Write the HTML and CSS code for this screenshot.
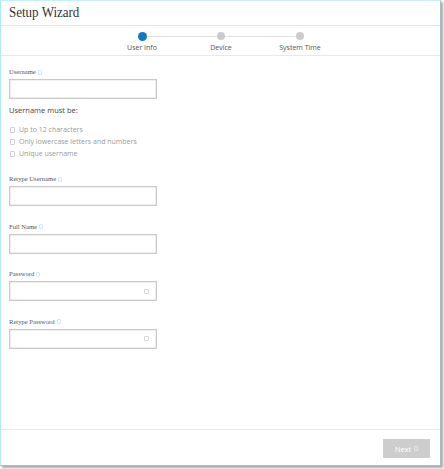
FILE: index.html
```html
<!DOCTYPE html>
<html>
<head>
<meta charset="utf-8">
<link rel="stylesheet" href="styles.css">
</head>
<body>
<div class="window">
  <div class="header"><h1 class="title">Setup Wizard</h1></div>
  <div class="stepper">
    <div class="step active"><span class="dot"></span><span class="step-label">User Info</span></div>
    <div class="step"><span class="dot"></span><span class="step-label">Device</span></div>
    <div class="step last"><span class="dot"></span><span class="step-label">System Time</span></div>
  </div>
  <div class="form">
    <div class="field first">
      <div class="label">Username <span class="info"></span></div>
      <div class="input"></div>
    </div>
    <div class="rules-title">Username must be:</div>
    <ul class="rules">
      <li><span class="box"></span>Up to 12 characters</li>
      <li><span class="box"></span>Only lowercase letters and numbers</li>
      <li><span class="box"></span>Unique username</li>
    </ul>
    <div class="field after-rules">
      <div class="label">Retype Username <span class="info"></span></div>
      <div class="input"></div>
    </div>
    <div class="field">
      <div class="label">Full Name <span class="info"></span></div>
      <div class="input"></div>
    </div>
    <div class="field">
      <div class="label">Password <span class="info"></span></div>
      <div class="input pw"><span class="eye"></span></div>
    </div>
    <div class="field">
      <div class="label">Retype Password <span class="info"></span></div>
      <div class="input pw"><span class="eye"></span></div>
    </div>
  </div>
  <div class="footer">
    <button class="next">Next <span class="arrow"></span></button>
  </div>
</div>
</body>
</html>
```
FILE: styles.css
```css
html, body { margin: 0; padding: 0; background: #fff; }
body { width: 444px; height: 469px; overflow: hidden; }
.window {
  box-sizing: border-box;
  width: 441px;
  height: 466px;
  border-left: 1px solid #aeeafb;
  border-top: 1px solid #c6f1fc;
  border-right: 1px solid #a9bcc3;
  border-bottom: 1px solid #a9bcc3;
  box-shadow: 2px 2px 2px rgba(60, 70, 75, 0.45);
  display: flex;
  flex-direction: column;
  background: #fff;
}
.header {
  height: 24px;
  border-bottom: 1px solid #e6e6e6;
  display: flex;
  align-items: center;
  padding-left: 8px;
}
.title {
  margin: 0;
  font-family: "Liberation Serif", "Times New Roman", serif;
  font-weight: normal;
  font-size: 13px;
  color: #333;
  line-height: 1;
  margin-top: -1px;
  transform: scaleY(1.1);
  transform-origin: left center;
}
.stepper {
  height: 29px;
  border-bottom: 1px solid #e8e8e8;
  display: flex;
  justify-content: center;
  padding-left: 1px;
}
.step {
  width: 79px;
  position: relative;
  display: flex;
  flex-direction: column;
  align-items: center;
}
.step:not(.last)::after {
  content: "";
  position: absolute;
  top: 10px;
  left: 50%;
  width: 79px;
  height: 1px;
  background: #e0e0e0;
}
.dot {
  margin-top: 6px;
  width: 8px;
  height: 8px;
  border-radius: 50%;
  background: #cbcbcb;
  position: relative;
  z-index: 1;
}
.step.active .dot {
  margin-top: 5.5px;
  width: 9px;
  height: 9px;
  background: #1677c4;
}
.step-label {
  margin-top: 3px;
  font-family: "Open Sans", sans-serif;
  font-size: 7px;
  line-height: 10px;
  color: #555;
}
.step.active .step-label { margin-top: 2.5px; }
.form {
  flex: 1;
  padding: 0 8px;
  border-bottom: 1px solid #e8e8e8;
}
.field { margin-top: 15.5px; }
.field.first { margin-top: 11px; }
.field.after-rules { margin-top: 14px; }
.label {
  font-family: "Liberation Serif", "Times New Roman", serif;
  font-size: 6.6px;
  line-height: 10px;
  color: #555;
  display: flex;
  align-items: center;
}
.info {
  display: inline-block;
  margin-left: 2px;
  width: 2px;
  height: 3px;
  border: 1px solid #cfe7f6;
  border-radius: 1px;
}
.input {
  margin-top: 2px;
  box-sizing: border-box;
  width: 148px;
  height: 20px;
  border: 1px solid #c9c9c9;
  box-shadow: inset 0 0 0 0.5px #e0e0e0;
  background: #fff;
  display: flex;
  align-items: center;
  justify-content: flex-end;
  padding-right: 7px;
}
.eye {
  width: 3px;
  height: 3px;
  border: 1px solid #d6d6d6;
  border-radius: 1px;
}
.rules-title {
  margin-top: 6px;
  font-family: "Open Sans", sans-serif;
  font-size: 7.5px;
  line-height: 10px;
  color: #444;
}
.rules {
  list-style: none;
  margin: 9px 0 0;
  padding: 0;
}
.rules li {
  font-family: "Open Sans", sans-serif;
  font-size: 7px;
  line-height: 12px;
  color: #9a9a9a;
  display: flex;
  align-items: center;
}
.box {
  display: inline-block;
  width: 3px;
  height: 4px;
  border: 1px solid #d2d2d2;
  border-radius: 1px;
  margin: 0 4px 0 1px;
}
.footer {
  height: 35px;
  display: flex;
  justify-content: flex-end;
  align-items: flex-start;
  padding: 9px 10px 0 0;
  box-sizing: border-box;
}
.next {
  width: 47px;
  height: 19px;
  border: none;
  background: #cdcdcd;
  color: #fff;
  font-family: "Open Sans", sans-serif;
  font-size: 7.5px;
  padding: 0;
  display: flex;
  align-items: center;
  justify-content: center;
  gap: 3px;
}
.arrow {
  display: inline-block;
  width: 2px;
  height: 3px;
  border: 1px solid #e6e6e6;
  border-radius: 1px;
}
```
